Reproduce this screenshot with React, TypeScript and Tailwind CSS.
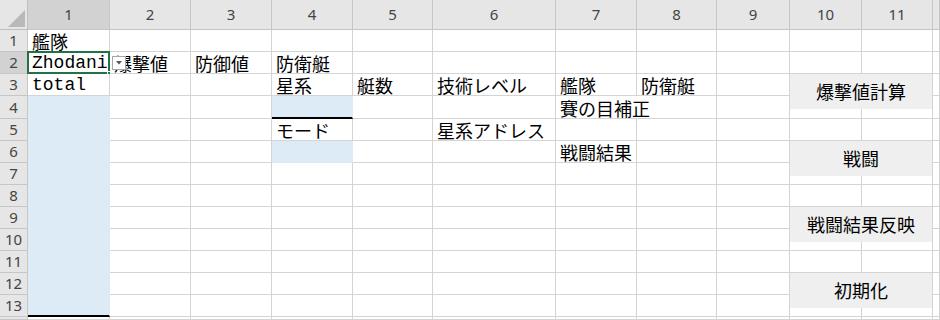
import React from "react";

const COLS = 12;
const ROWS = 14;

const texts: Record<string, string> = {
  "1-1": "艦隊",
  "2-1": "Zhodani",
  "2-2": "爆撃値",
  "2-3": "防御値",
  "2-4": "防衛艇",
  "3-1": "total",
  "3-4": "星系",
  "3-5": "艇数",
  "3-6": "技術レベル",
  "3-7": "艦隊",
  "3-8": "防衛艇",
  "4-7": "賽の目補正",
  "5-4": "モード",
  "5-6": "星系アドレス",
  "6-7": "戦闘結果",
};

const mono = new Set(["2-1", "3-1"]);
const spans: Record<string, number> = { "4-7": 2 };
const hidden = new Set(["4-8"]);

function isBlue(r: number, c: number) {
  if (c === 1 && r >= 4 && r <= 13) return true;
  if (c === 4 && (r === 4 || r === 6)) return true;
  return false;
}

// floating form buttons drawn over the sheet
const buttons = [
  { label: "爆撃値計算", top: "top-[74px]" },
  { label: "戦闘", top: "top-[141px]" },
  { label: "戦闘結果反映", top: "top-[207px]" },
  { label: "初期化", top: "top-[273px]" },
];

function Corner() {
  return (
    <div className="relative border-r border-b border-[#bfbfbf] bg-[#e6e6e6]">
      <svg className="absolute left-0 top-0" width="28" height="30" viewBox="0 0 28 30">
        <polygon points="25,10 25,27 8,27" fill="#b9b9b9" />
      </svg>
    </div>
  );
}

function Cell({ r, c }: { r: number; c: number }) {
  const key = `${r}-${c}`;
  const text = texts[key];
  const blue = isBlue(r, c);
  const span = spans[key];
  let cls = "relative flex items-end overflow-visible whitespace-nowrap pl-[4px] border-r border-b ";
  cls += blue ? "bg-[#ddebf7] border-[#ddebf7] " : "bg-white border-[#d4d4d4] ";
  if (span === 2) cls += "col-span-2 ";
  if (key === "4-4") cls += "border-b-2 border-b-black ";
  if (key === "13-1") cls += "border-b-2 border-b-black ";
  const font = mono.has(key)
    ? "font-['Liberation_Mono',monospace] text-[18px]"
    : "font-['Noto_Sans_CJK_JP',sans-serif] text-[18px]";

  return (
    <div className={cls}>
      {text && <div className={`${font} h-[20px] leading-[20px] text-black`}>{text}</div>}
      {key === "2-1" && (
        <>
          <div className="pointer-events-none absolute -left-[1px] -top-[1px] h-[23px] w-[83px] border-2 border-[#217346]" />
          <div className="absolute -bottom-[3px] -right-[3px] h-[5px] w-[5px] border border-white bg-[#217346]" />
        </>
      )}
      {key === "2-2" && (
        <div className="absolute left-[2px] top-[4px] z-10 flex h-[14px] w-[14px] items-center justify-center border border-[#a6a6a6] bg-white">
          <svg width="6" height="4" viewBox="0 0 6 4">
            <polygon points="0,0 6,0 3,3.5" fill="#555" />
          </svg>
        </div>
      )}
    </div>
  );
}

export default function App() {
  const rows = Array.from({ length: ROWS }, (_, i) => i + 1);
  const cols = Array.from({ length: COLS }, (_, i) => i + 1);

  return (
    <div className="relative h-[320px] w-[940px] overflow-hidden bg-white">
      <div className="grid h-full grid-cols-[28px_82px_81px_81px_81px_80px_123px_81px_80px_73px_72px_71px_1fr] grid-rows-[30px_22px_22px_22px_23px_22px_22px_22px_22px_22px_22px_22px_22px_22px_1fr]">
        <Corner />
        {cols.map((c) => (
          <div
            key={`h${c}`}
            className={`flex items-center justify-center border-r border-b border-[#c6c6c6] font-['Noto_Sans',sans-serif] text-[15px] text-[#444] ${
              c === 1 ? "bg-[#d2d2d2]" : "bg-[#e6e6e6]"
            }`}
          >
            {c <= 11 ? c : ""}
          </div>
        ))}
        {rows.map((r) => (
          <React.Fragment key={r}>
            <div
              className={`flex items-center justify-center border-r border-b border-[#c6c6c6] font-['Noto_Sans',sans-serif] text-[15px] leading-none text-[#444] ${
                r === 2 ? "bg-[#d2d2d2]" : "bg-[#e6e6e6]"
              }`}
            >
              {r <= 13 ? r : ""}
            </div>
            {cols.map((c) =>
              hidden.has(`${r}-${c}`) ? null : <Cell key={`${r}-${c}`} r={r} c={c} />
            )}
          </React.Fragment>
        ))}
      </div>

      {buttons.map((b) => (
        <div
          key={b.label}
          className={`absolute left-[790px] ${b.top} flex h-[35px] w-[142px] items-center justify-center bg-[#efefef] font-['Noto_Sans_CJK_JP',sans-serif] text-[18px] text-black`}
        >
          {b.label}
        </div>
      ))}
    </div>
  );
}
